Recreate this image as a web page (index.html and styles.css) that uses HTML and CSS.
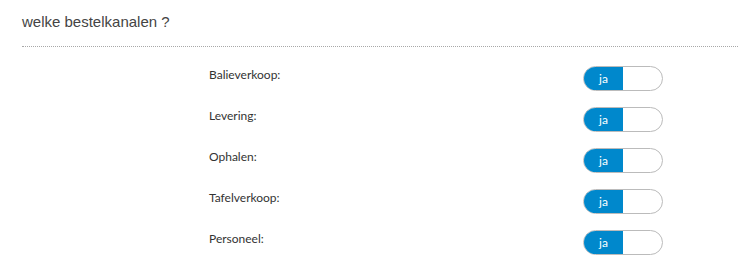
FILE: index.html
```html
<!DOCTYPE html>
<html>
<head>
<meta charset="utf-8">
<link rel="stylesheet" href="styles.css">
</head>
<body>
<div class="panel">
  <div class="header"><h2 class="title">welke bestelkanalen ?</h2></div>
  <div class="rows">
    <div class="row"><span class="label">Balieverkoop:</span><span class="toggle"><span class="on">ja</span><span class="off"></span></span></div>
    <div class="row"><span class="label">Levering:</span><span class="toggle"><span class="on">ja</span><span class="off"></span></span></div>
    <div class="row"><span class="label">Ophalen:</span><span class="toggle"><span class="on">ja</span><span class="off"></span></span></div>
    <div class="row"><span class="label">Tafelverkoop:</span><span class="toggle"><span class="on">ja</span><span class="off"></span></span></div>
    <div class="row"><span class="label">Personeel:</span><span class="toggle"><span class="on">ja</span><span class="off"></span></span></div>
  </div>
</div>
</body>
</html>
```
FILE: styles.css
```css
html, body { margin: 0; padding: 0; background: #fff; }
.panel { padding: 0 8px 0 22px; }
.header { border-bottom: 1px dotted #a8a8a8; height: 47px; box-sizing: border-box; display: flex; align-items: flex-start; }
.title { margin: 0; padding-top: 13px; font: 15px/18px "Liberation Sans", Arial, sans-serif; color: #444; font-weight: normal; }
.rows { padding-top: 11px; padding-left: 187px; }
.row { display: flex; align-items: center; height: 41px; }
.label { width: 374px; font: 12px/16px Lato, sans-serif; color: #333; margin-bottom: 8px; }
.toggle { display: flex; width: 80px; height: 25px; box-sizing: border-box; border: 1px solid #bbb; border-radius: 13px; overflow: hidden; background: #fff; }
.on { width: 39px; background: #0088cc; color: #fff; font: 12px/23px Lato, sans-serif; text-align: center; }
.off { flex: 1; }
```
